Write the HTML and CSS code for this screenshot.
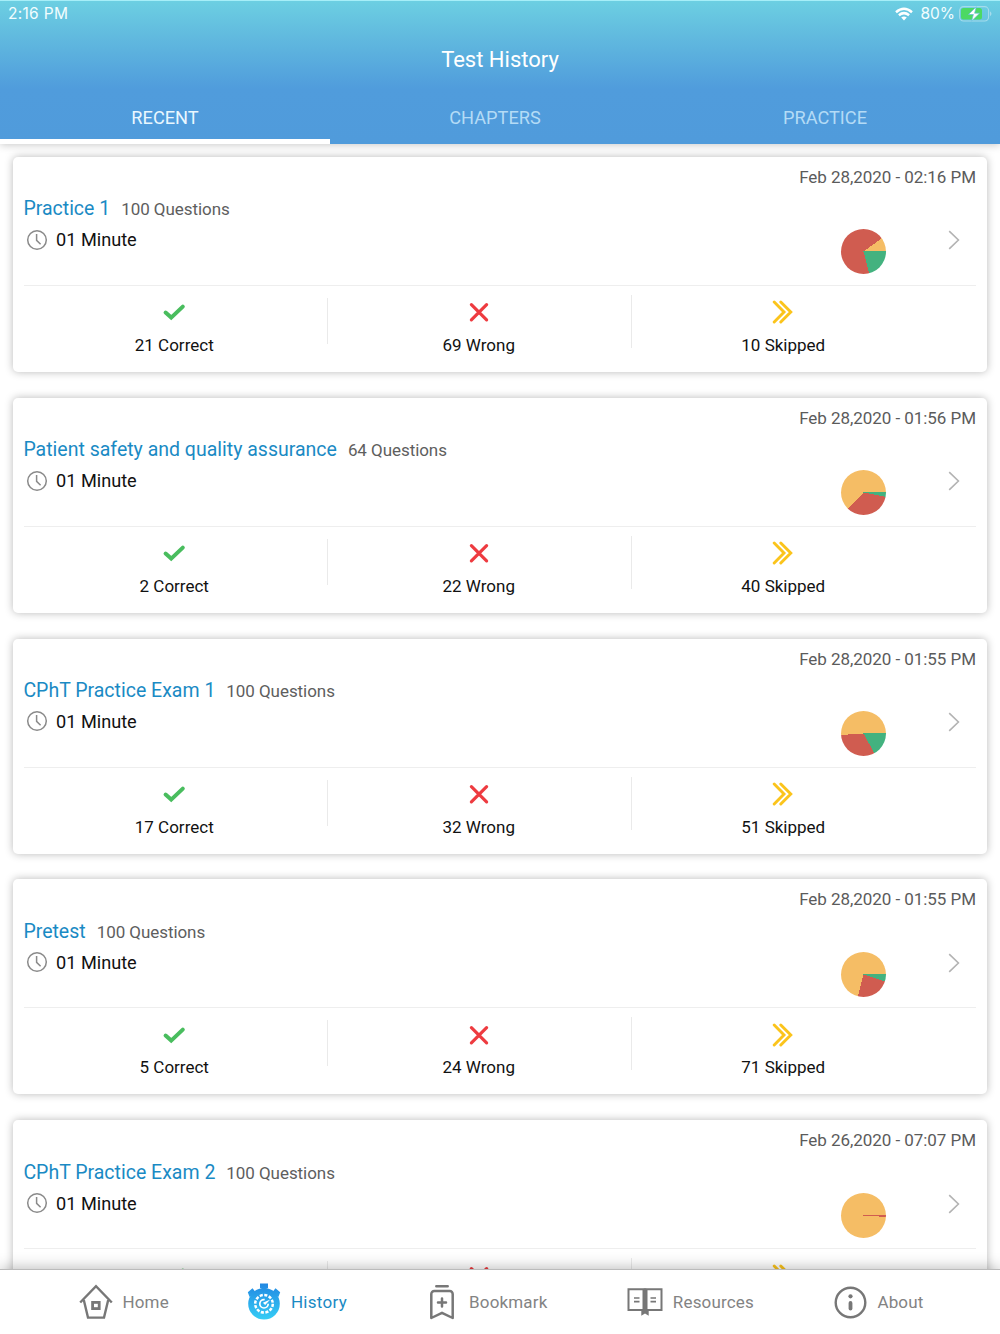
FILE: index.html
```html
<!DOCTYPE html>
<html lang="en">
<head>
<meta charset="utf-8">
<title>Test History</title>
<link rel="stylesheet" href="styles.css">
</head>
<body>
<svg class="sprite" aria-hidden="true">
  <symbol id="clock" viewBox="0 0 22 22"><circle cx="11" cy="11" r="9.3" fill="none" stroke="#8a8a8a" stroke-width="1.5"/><path d="M10.6 5v6.4l4 3.8" fill="none" stroke="#8a8a8a" stroke-width="1.5"/></symbol>
  <symbol id="check" viewBox="0 0 24 24"><path d="M3.600 12.600l5.600 5L20.800 6.600" fill="none" stroke="#49bd5e" stroke-width="4" stroke-linecap="round"/></symbol>
  <symbol id="cross" viewBox="0 0 24 24"><path d="M4.400 4.700l15.200 15.200M19.600 4.700L4.400 19.900" fill="none" stroke="#ee3b40" stroke-width="3.200" stroke-linecap="round"/></symbol>
  <symbol id="skip" viewBox="0 0 24 24"><path d="M3.200 2l9.800 10-9.800 10M9.800 2l10 10-10 10" fill="none" stroke="#fbc41c" stroke-width="2.900" stroke-linecap="round"/></symbol>
  <symbol id="next" viewBox="0 0 12 20"><path d="M1.200 1.200L10.400 10l-9.200 8.800" fill="none" stroke="#b3b3b3" stroke-width="1.600"/></symbol>
</svg>

<div class="app">
  <header class="header">
    <div class="status">
      <span class="status-time">2:16 PM</span>
      <svg class="wifi" viewBox="0 0 18 14"><g fill="none" stroke="#fff" stroke-width="2.500"><path d="M1 5.200Q9-1.600 17 5.200"/><path d="M3.900 8.200q5.100-4.100 10.200 0"/></g><path d="M9 13.600L6.200 10.600q2.800-2 5.600 0z" fill="#fff"/></svg>
      <span class="status-level">80%</span>
      <svg class="battery" viewBox="0 0 33 16"><rect x=".6" y=".6" width="29" height="14.400" rx="4" fill="none" stroke="#a5dcec" stroke-width="1.100"/><path d="M31 5.300q3 2.500 0 5z" fill="#a5dcec"/><rect x="2" y="2" width="21" height="11.600" rx="2.500" fill="#4cd964"/><path d="M17.300.8L9.400 8.500h5L12.600 15l8-7.800h-5z" fill="#fff" stroke="#62bcdd" stroke-width=".7"/></svg>
    </div>
    <h1 class="title">Test History</h1>
    <nav class="tabs">
      <a class="tab active">RECENT</a>
      <a class="tab">CHAPTERS</a>
      <a class="tab">PRACTICE</a>
    </nav>
  </header>

  <main class="list">
    <article class="card">
      <div class="date">Feb 28,2020 - 02:16 PM</div>
      <div class="summary">
        <div class="info">
          <div class="heading"><h2 class="name">Practice 1</h2><span class="count">100 Questions</span></div>
          <div class="time"><svg class="clock"><use href="#clock"/></svg>01 Minute</div>
        </div>
        <div class="pie" style="--correct:21%;--wrong:90%"></div>
        <svg class="next"><use href="#next"/></svg>
      </div>
      <div class="stats">
        <div class="stat"><svg class="mark"><use href="#check"/></svg>21 Correct</div>
        <div class="stat"><svg class="mark"><use href="#cross"/></svg>69 Wrong</div>
        <div class="stat"><svg class="mark"><use href="#skip"/></svg>10 Skipped</div>
      </div>
    </article>
    <article class="card">
      <div class="date">Feb 28,2020 - 01:56 PM</div>
      <div class="summary">
        <div class="info">
          <div class="heading"><h2 class="name">Patient safety and quality assurance</h2><span class="count">64 Questions</span></div>
          <div class="time"><svg class="clock"><use href="#clock"/></svg>01 Minute</div>
        </div>
        <div class="pie" style="--correct:3.125%;--wrong:37.5%"></div>
        <svg class="next"><use href="#next"/></svg>
      </div>
      <div class="stats">
        <div class="stat"><svg class="mark"><use href="#check"/></svg>2 Correct</div>
        <div class="stat"><svg class="mark"><use href="#cross"/></svg>22 Wrong</div>
        <div class="stat"><svg class="mark"><use href="#skip"/></svg>40 Skipped</div>
      </div>
    </article>
    <article class="card">
      <div class="date">Feb 28,2020 - 01:55 PM</div>
      <div class="summary">
        <div class="info">
          <div class="heading"><h2 class="name">CPhT Practice Exam 1</h2><span class="count">100 Questions</span></div>
          <div class="time"><svg class="clock"><use href="#clock"/></svg>01 Minute</div>
        </div>
        <div class="pie" style="--correct:17%;--wrong:49%"></div>
        <svg class="next"><use href="#next"/></svg>
      </div>
      <div class="stats">
        <div class="stat"><svg class="mark"><use href="#check"/></svg>17 Correct</div>
        <div class="stat"><svg class="mark"><use href="#cross"/></svg>32 Wrong</div>
        <div class="stat"><svg class="mark"><use href="#skip"/></svg>51 Skipped</div>
      </div>
    </article>
    <article class="card">
      <div class="date">Feb 28,2020 - 01:55 PM</div>
      <div class="summary">
        <div class="info">
          <div class="heading"><h2 class="name">Pretest</h2><span class="count">100 Questions</span></div>
          <div class="time"><svg class="clock"><use href="#clock"/></svg>01 Minute</div>
        </div>
        <div class="pie" style="--correct:5%;--wrong:29%"></div>
        <svg class="next"><use href="#next"/></svg>
      </div>
      <div class="stats">
        <div class="stat"><svg class="mark"><use href="#check"/></svg>5 Correct</div>
        <div class="stat"><svg class="mark"><use href="#cross"/></svg>24 Wrong</div>
        <div class="stat"><svg class="mark"><use href="#skip"/></svg>71 Skipped</div>
      </div>
    </article>
    <article class="card">
      <div class="date">Feb 26,2020 - 07:07 PM</div>
      <div class="summary">
        <div class="info">
          <div class="heading"><h2 class="name">CPhT Practice Exam 2</h2><span class="count">100 Questions</span></div>
          <div class="time"><svg class="clock"><use href="#clock"/></svg>01 Minute</div>
        </div>
        <div class="pie" style="--correct:0%;--wrong:1%"></div>
        <svg class="next"><use href="#next"/></svg>
      </div>
      <div class="stats">
        <div class="stat"><svg class="mark"><use href="#check"/></svg></div>
        <div class="stat"><svg class="mark"><use href="#cross"/></svg></div>
        <div class="stat"><svg class="mark"><use href="#skip"/></svg></div>
      </div>
    </article>
  </main>

  <nav class="bottom">
    <a class="item"><svg width="34" height="36" viewBox="0 0 34 36" fill="none" stroke="#777" stroke-width="2.400"><path d="M1.200 18.500L17 2.200l15.800 16.300"/><path d="M4.800 16L9 33.600h16L29.200 16"/><rect x="13.600" y="18.400" width="6.600" height="6.200" stroke-width="2.800"/></svg><span>Home</span></a>
    <a class="item current"><svg width="34" height="38" viewBox="0 0 34 38"><defs><linearGradient id="watch" x1="0" y1="0" x2="0" y2="38" gradientUnits="userSpaceOnUse"><stop offset="0" stop-color="#2287e2"/><stop offset="1" stop-color="#36d0f6"/></linearGradient></defs><g fill="url(#watch)"><path d="M13 .5h8v4.500h-1.500V9h-5V5H13z"/><path d="M.8 9.300L5.500 5.200l3 3.700-1.200 1.100 2 2.400-3.500 3-2-2.300-1.200 1z"/><path d="M33.200 9.300L28.500 5.200l-3 3.700 1.200 1.100-2 2.400 3.500 3 2-2.300 1.200 1z"/><circle cx="17" cy="20.800" r="15.800"/></g><circle cx="17" cy="20.800" r="8.800" fill="none" stroke="#fff" stroke-width="2.500" stroke-dasharray="3.100 1.508"/><circle cx="17" cy="20.800" r="4.200" fill="none" stroke="#fff" stroke-width="1.700" stroke-dasharray="20 6.400"/><path d="M23.300 16.500l-5.200 5.400-2.200-2.200z" fill="#fff"/></svg><span>History</span></a>
    <a class="item bookmark"><svg width="26" height="38" viewBox="0 0 26 38" fill="none" stroke="#777" stroke-width="2.500" stroke-linecap="round" stroke-linejoin="round"><path d="M7.300 3.300h11.400M2.300 35V11a3 3 0 0 1 3-3h15.400a3 3 0 0 1 3 3v24L13 29.800zM13 15.500v8M9 19.500h8"/></svg><span>Bookmark</span></a>
    <a class="item resources"><svg width="36" height="30" viewBox="0 0 36 30" fill="none" stroke="#777" stroke-width="2"><path d="M1.500 2.200h15V23h-15zM19.500 2.200h15V23h-15z"/><path d="M18 1.200V25" stroke-width="2.400"/><path d="M7 11h5.500M7 14.700h5.500M23.500 11H29M23.500 14.700H29" stroke-width="1.700"/><path d="M14.300 23.500h7.400v5.200L18 26.400l-3.700 2.300z" fill="#777" stroke="none"/></svg><span>Resources</span></a>
    <a class="item"><svg width="33" height="34" viewBox="0 0 33 34" fill="none" stroke="#777"><circle cx="16.500" cy="17.500" r="14.800" stroke-width="2.400"/><path d="M16.500 18v5.500" stroke-width="3.800" stroke-linecap="round"/><circle cx="16.500" cy="11.300" r="2.100" fill="#777" stroke="none"/></svg><span>About</span></a>
  </nav>
</div>
</body>
</html>
```
FILE: styles.css
```css
* { box-sizing: border-box; }
body { margin: 0; font-family: Roboto, "Liberation Sans", sans-serif; background: #fff; }
.sprite { display: none; }
svg { display: block; flex: none; }

.app { height: 1334px; display: flex; flex-direction: column; overflow: hidden; }

.header {
  flex: none;
  height: 144px;
  display: flex;
  flex-direction: column;
  color: #fff;
  background: linear-gradient(#6ccfe2 0, #62bcdf 32px, #509cdc 88px, #509bdb 144px);
  border-top: 1px solid #a6eef8;
  box-shadow: 0 1px 8px rgba(0, 0, 0, .22);
  z-index: 1;
}
.status { height: 25px; display: flex; align-items: center; padding: 0 8px 0 8px; font: 400 15.5px Inter, sans-serif; color: #f2fdfe; }
.status-time { flex: 1; letter-spacing: .3px; }
.wifi { width: 18px; height: 14px; }
.status-level { margin: 0 4px 0 7px; letter-spacing: 0; }
.battery { width: 33px; height: 16px; }
.title { margin: 0; height: 67px; line-height: 67px; text-align: center; font-size: 22px; font-weight: 400; }
.tabs { flex: 1; display: grid; grid-template-columns: repeat(3, 330px); }
.tab { display: flex; align-items: center; justify-content: center; border-bottom: 5px solid transparent; padding-top: 3px; font-size: 18.200px; color: #b4dbf6; }
.tab.active { color: #e9f7ff; border-color: #fff; }

.list { flex: 1; min-height: 0; overflow: hidden; padding: 12.800px 13px 0; display: flex; flex-direction: column; gap: 25.900px; }
.card { flex: none; height: 215px; padding: 0 11px; background: #fff; border-radius: 5px; box-shadow: 0 0 9px rgba(0, 0, 0, .28); }
.date { height: 40px; line-height: 40px; text-align: right; font-size: 17px; letter-spacing: -.05px; color: #5b5b5b; }
.summary { height: 89px; display: flex; border-bottom: 1px solid #eee; }
.info { flex: 1; padding-top: .4px; }
.heading { height: 24px; display: flex; align-items: baseline; gap: 11px; margin-left: -.6px; }
.name { margin: 0; font-size: 19.500px; line-height: 24px; font-weight: 400; color: #1a8ac4; }
.count { font-size: 17px; letter-spacing: -.06px; color: #5e5e5e; }
.time { display: flex; align-items: center; gap: 8px; height: 37px; padding-left: 2px; font-size: 18.150px; color: #111; }
.clock { width: 22px; height: 22px; }
.pie {
  width: 45px;
  height: 45px;
  margin: 32.400px 62px 0 0;
  border-radius: 50%;
  background: conic-gradient(from 90deg, #43b27f var(--correct), #d05c50 0 var(--wrong), #f5bd65 0);
}
.next { width: 12px; height: 20px; margin: 33.400px 16px 0 0; }
.stats { display: grid; grid-template-columns: repeat(3, 304.5px); margin-left: -2px; }
.stat { position: relative; display: flex; flex-direction: column; align-items: center; padding-top: 14.300px; font-size: 17px; line-height: 24px; gap: 8.700px; color: #111; }
.stat + .stat::before { content: ""; position: absolute; left: 0; top: 12px; width: 1px; height: 46px; background: #eaeaea; }
.stat + .stat + .stat::before { top: 9px; height: 53px; }
.mark { width: 24px; height: 24px; }

.bottom { flex: none; height: 65px; display: flex; justify-content: space-between; align-items: center; padding: 0 76.500px 0 78.500px; background: #fff; border-top: 1px solid #bbb; box-shadow: 0 -1px 14px rgba(0, 0, 0, .28); z-index: 1; }
.item { display: flex; align-items: center; gap: 10px; font-size: 17px; letter-spacing: .15px; color: #838383; }
.current { margin: 0 2px 0 -2px; letter-spacing: .3px; color: #1a8ac4; }
.bookmark { gap: 14px; }
.resources { margin: 0 .6px 0 -.6px; }
```
